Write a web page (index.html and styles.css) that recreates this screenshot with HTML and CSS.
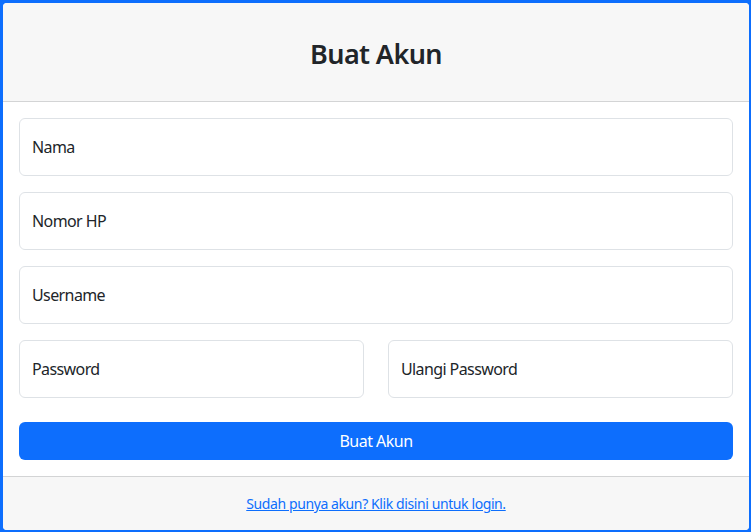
FILE: index.html
```html
<!DOCTYPE html>
<html lang="id">
  <head>
    <meta charset="UTF-8" />
    <meta name="viewport" content="width=device-width, initial-scale=1.0" />
    <title>Buat Akun</title>
    <link rel="stylesheet" href="styles.css">
  </head>
  <body>
    <div class="card">
      <div class="card-header">
        <h2 class="title">Buat Akun</h2>
      </div>
      <form class="card-body">
        <div class="field">
          <input type="text" id="nama" placeholder=" " />
          <label for="nama">Nama</label>
        </div>
        <div class="field">
          <input type="text" id="hp" placeholder=" " />
          <label for="hp">Nomor HP</label>
        </div>
        <div class="field">
          <input type="text" id="username" placeholder=" " />
          <label for="username">Username</label>
        </div>
        <div class="row">
          <div class="field">
            <input type="password" id="password" placeholder=" " />
            <label for="password">Password</label>
          </div>
          <div class="field">
            <input type="password" id="password2" placeholder=" " />
            <label for="password2">Ulangi Password</label>
          </div>
        </div>
        <button type="submit" class="btn">Buat Akun</button>
      </form>
      <div class="card-footer">
        <a href="#">Sudah punya akun? Klik disini untuk login.</a>
      </div>
    </div>
  </body>
</html>
```

FILE: styles.css
```css
:root {
  --blue: #0d6efd;
  --text-color: #212529;
  --border-color: #dee2e6;
  --line-color: #d3d4d5;
  --cap-color: #f7f7f7;
}

* {
  margin: 0;
  padding: 0;
  box-sizing: border-box;
}

body {
  background-color: var(--blue);
  padding: 3px 2px 2px 3px;
  font-family: 'Noto Sans', 'Open Sans', sans-serif;
  color: var(--text-color);
}

.card {
  background-color: #fff;
  border-radius: 4px;
  overflow: hidden;
}

.card-header {
  background-color: var(--cap-color);
  border-bottom: 1px solid var(--line-color);
  height: 99px;
  display: flex;
  align-items: center;
  justify-content: center;
  padding-top: 2px;
}

.title {
  font-size: 27px;
  font-weight: 600;
  letter-spacing: -0.6px;
}

.card-body {
  padding: 16px;
}

.field {
  position: relative;
  margin-bottom: 16px;
}

.field input {
  width: 100%;
  height: 58px;
  border: 1px solid var(--border-color);
  border-radius: 6px;
  background: #fff;
  font: inherit;
}

.field label {
  position: absolute;
  top: 0;
  left: 0;
  height: 58px;
  padding: 0 13px;
  display: flex;
  align-items: center;
  font-size: 16px;
  letter-spacing: -0.6px;
  pointer-events: none;
}

.row {
  display: grid;
  grid-template-columns: 1fr 1fr;
  column-gap: 24px;
}

.btn {
  display: block;
  width: 100%;
  height: 38px;
  margin-top: 8px;
  border: none;
  border-radius: 6px;
  background-color: var(--blue);
  color: #fff;
  font: inherit;
  font-size: 16px;
  letter-spacing: -0.5px;
}

.card-footer {
  background-color: var(--cap-color);
  border-top: 1px solid var(--line-color);
  padding: 16px;
  text-align: center;
  font-size: 14px;
  line-height: 21px;
}

.card-footer a {
  color: var(--blue);
  letter-spacing: -0.4px;
}
```
